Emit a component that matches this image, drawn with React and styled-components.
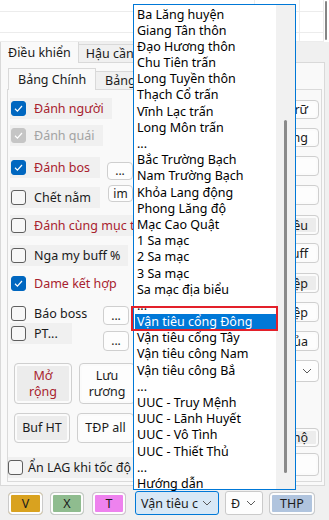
import React from "react";
import styled, { createGlobalStyle, css } from "styled-components";

const GlobalStyle = createGlobalStyle`
  html, body { margin: 0; padding: 0; }
  body {
    background: #f0f0f0;
    font-family: "Noto Sans", "Segoe UI", sans-serif;
    font-size: 12px;
    color: #1b1b1b;
  }
  * { box-sizing: border-box; }
`;

const places = [
  "Ba Lăng huyện", "Giang Tân thôn", "Đạo Hương thôn", "Chu Tiên trấn",
  "Long Tuyền thôn", "Thạch Cổ trấn", "Vĩnh Lạc trấn", "Long Môn trấn", "...",
  "Bắc Trường Bạch", "Nam Trường Bạch", "Khỏa Lang động", "Phong Lăng độ",
  "Mạc Cao Quật", "1 Sa mạc", "2 Sa mạc", "3 Sa mạc", "Sa mạc địa biểu", "...",
  "Vận tiêu cổng Đông", "Vận tiêu cổng Tây", "Vận tiêu công Nam", "Vận tiêu công Bắ",
  "...", "UUC - Truy Mệnh", "UUC - Lãnh Huyết", "UUC - Vô Tình", "UUC - Thiết Thủ",
  "...", "Hướng dẫn",
];

const rows = [
  { label: "Đánh người", state: "on", tone: "red", w: 102, mt: 8 },
  { label: "Đánh quái", state: "dis", tone: "dis", w: 93, mt: 7 },
  { label: "Đánh bos", state: "on", tone: "red", w: 90, mt: 12, extra: "...", ex: { ml: 7, mt: 5, w: 26, h: 18 } },
  { label: "Chết nằm", state: "off", tone: "ink", w: 90, mt: 10, extra: "im", ex: { ml: 8, mt: -2, w: 25, h: 17 } },
  { label: "Đánh cùng mục tiêu", state: "off", tone: "red", w: 170, mt: 8 },
  { label: "Nga my buff %", state: "off", tone: "ink", w: 118, mt: 10 },
  { label: "Dame kết hợp", state: "on", tone: "red", w: 118, mt: 8, plain: true },
  { label: "Báo boss", state: "off", tone: "ink", w: 88, mt: 10, plain: true, extra: "...", ex: { ml: 5, mt: 3, w: 26, h: 19 } },
  { label: "PT...", state: "off", tone: "ink", w: 62, mt: 0, extra: "...", ex: { ml: 31, mt: 8, w: 26, h: 20 } },
];

const rightButtons = [
  { label: "Lưu trữ", mt: 10, h: 19 },
  { label: "Tăng", mt: 9, h: 19 },
  { label: "", mt: 9, h: 20 },
  { label: "", mt: 9, h: 20 },
  { label: "Điều", mt: 10, h: 20, gray: true },
  { label: "Buff", mt: 8, h: 20 },
  { label: "Nghiệp", mt: 10, h: 20, gray: true },
  { label: "Hiệp", mt: 9, h: 20 },
  { label: "Của", mt: 9, h: 20 },
];

const Chevron = () => (
  <svg width="10" height="6" viewBox="0 0 10 6">
    <path d="M1 1 L5 5 L9 1" fill="none" stroke="#5a5a5a" strokeWidth="1" />
  </svg>
);

const Check = ({ state }) => (
  <Box $state={state}>
    {state !== "off" && (
      <svg width="11" height="11" viewBox="0 0 11 11">
        <path d="M2 5.8 L4.4 8.1 L9 3" fill="none" stroke="#fff" strokeWidth="1.2" />
      </svg>
    )}
  </Box>
);

export default function App() {
  return (
    <Root>
      <GlobalStyle />
      <ListView>
        <ListGrid>
          {Array.from({ length: 9 }).map((_, i) => (
            <Cell key={i} />
          ))}
        </ListGrid>
        <ListScroll>
          <ListThumb />
        </ListScroll>
      </ListView>

      <TabStrip>
        <Tab $active>Điều khiển</Tab>
        <Tab>Hậu cần</Tab>
      </TabStrip>
      <OuterPage>
        <InnerStrip>
          <Tab $active $inner>Bảng Chính</Tab>
          <Tab $inner>Bảng phụ</Tab>
        </InnerStrip>
        <InnerPage>
          <LeftCol>
            {rows.map((r) => (
              <Row key={r.label} $mt={r.mt}>
                <CheckLabel $w={r.w} $plain={r.plain}>
                  <Check state={r.state} />
                  <LabelText $tone={r.tone}>{r.label}</LabelText>
                </CheckLabel>
                {r.extra && (
                  <SmallBtn $ml={r.ex.ml} $mt={r.ex.mt} $w={r.ex.w} $h={r.ex.h}>
                    {r.extra}
                  </SmallBtn>
                )}
              </Row>
            ))}
            <BtnPair $mt={20}>
              <PushBtn $w={58} $h={41} $gray $tone="red">Mở<br />rộng</PushBtn>
              <PushBtn $w={56} $h={41}>Lưu<br />rương</PushBtn>
            </BtnPair>
            <BtnPair $mt={9}>
              <PushBtn $w={56} $h={30} $gray>Buf HT</PushBtn>
              <PushBtn $w={57} $h={30}>TĐP all</PushBtn>
            </BtnPair>
            <Row $mt={14}>
              <CheckLabel $w={170} $tight>
                <Check state="off" />
                <LabelText $tone="ink">Ẩn LAG khi tốc độ cao</LabelText>
              </CheckLabel>
            </Row>
          </LeftCol>
          <RightCol>
            {rightButtons.map((b, i) => (
              <SideBtn key={i} $mt={b.mt} $h={b.h} $gray={b.gray}>
                {b.label}
              </SideBtn>
            ))}
            <SideCombo>
              <Chevron />
            </SideCombo>
            <SideBtn $mt={46} $h={19} $gray>Bảo hộ</SideBtn>
            <SideBtn $mt={6} $h={23} />
          </RightCol>
        </InnerPage>
      </OuterPage>

      <BottomBar>
        <ColorBtn $fill="#d9a21f" $w={35}>V</ColorBtn>
        <ColorBtn $fill="#8fbc8f" $w={34}>X</ColorBtn>
        <ColorBtn $fill="#ee82ee" $w={34} $ml={8}>T</ColorBtn>
        <Combo $focus $w={84} $ml={9}>
          <span>Vận tiêu c</span>
          <Chevron />
        </Combo>
        <Combo $w={38} $ml={6}>
          <span>Đ</span>
          <Chevron />
        </Combo>
        <ColorBtn $fill="#b0c4de" $w={46} $ml={6}>THP</ColorBtn>
      </BottomBar>

      <DropList>
        <Items>
          {places.map((p, i) => (
            <Item key={i} $sel={i === 19}>{p}</Item>
          ))}
        </Items>
        <ScrollTrack>
          <ScrollThumb />
        </ScrollTrack>
      </DropList>
      <Marker />
    </Root>
  );
}

const Root = styled.div`
  position: relative;
  width: 329px;
  height: 520px;
  overflow: hidden;
  background: #f0f0f0;
`;

const ListView = styled.div`
  display: flex;
  height: 42px;
  background: #fff;
`;

const ListGrid = styled.div`
  flex: 1;
  display: grid;
  grid-template-columns: 255px 45px 1fr;
  grid-template-rows: 12px 21px 1fr;
`;

const Cell = styled.div`
  border-right: 1px solid #ececec;
  border-bottom: 1px solid #ececec;
`;

const ListScroll = styled.div`
  width: 5px;
  padding: 1px 1px 2px 1px;
`;

const ListThumb = styled.div`
  width: 2px;
  height: 100%;
  border-radius: 1px;
  background: #858585;
`;

const TabStrip = styled.div`
  display: flex;
  align-items: flex-end;
  width: 133px;
  height: 21px;
  overflow: hidden;
  position: relative;
  z-index: 1;
  margin-bottom: -1px;
`;

const InnerStrip = styled(TabStrip)`
  width: 132px;
  height: 22px;
  margin-top: 5px;
  padding-left: 7px;
`;

const Tab = styled.div`
  flex: none;
  height: ${(p) => (p.$active ? "22px" : "19px")};
  padding: 0 ${(p) => (p.$inner ? "9px" : "7px")} 1px;
  display: flex;
  align-items: center;
  white-space: nowrap;
  border: 1px solid #d9d9d9;
  border-bottom: ${(p) => (p.$active ? "none" : "1px solid #d9d9d9")};
  margin-left: ${(p) => (p.$active ? "0" : "-1px")};
  background: ${(p) => (p.$active ? "#f9f9f9" : "#f0f0f0")};
  position: relative;
  z-index: ${(p) => (p.$active ? 1 : 0)};
  font-size: 12.5px;
`;

const OuterPage = styled.div`
  width: 325px;
  height: 424px;
  background: #f9f9f9;
  border: 1px solid #d9d9d9;
`;

const InnerPage = styled.div`
  margin: -1px 2px 0 6px;
  height: 393px;
  background: #f9f9f9;
  border: 1px solid #dadada;
  display: grid;
  grid-template-columns: 126px 1fr 62px;
`;

const LeftCol = styled.div`
  display: flex;
  flex-direction: column;
  padding-left: 2px;
  grid-column: 1;
  overflow: hidden;
`;

const Row = styled.div`
  display: flex;
  height: 20px;
  margin-top: ${(p) => p.$mt}px;
  align-items: center;
  white-space: nowrap;
`;

const CheckLabel = styled.div`
  flex: none;
  width: ${(p) => p.$w}px;
  height: 21px;
  display: flex;
  align-items: center;
  gap: ${(p) => (p.$tight ? "5px" : "8px")};
  padding-left: ${(p) => (p.$tight ? "0" : "1px")};
  margin-left: ${(p) => (p.$tight ? "-2px" : "0")};
  background: ${(p) => (p.$plain ? "transparent" : "#f0f0f0")};
  overflow: hidden;
`;

const Box = styled.span`
  flex: none;
  width: 15px;
  height: 15px;
  border-radius: 3px;
  display: flex;
  align-items: center;
  justify-content: center;
  ${(p) =>
    p.$state === "on"
      ? css`background: #0067c0; border: 1px solid #0067c0;`
      : p.$state === "dis"
      ? css`background: #c5c5c5; border: 1px solid #c5c5c5;`
      : css`background: #f7f7f7; border: 1px solid #5f5f5f;`}
`;

const tones = { red: "#a8222e", ink: "#1b1b1b", dis: "#a3a3a3" };

const LabelText = styled.span`
  color: ${(p) => tones[p.$tone]};
  font-size: 12.5px;
`;

const SmallBtn = styled.div`
  flex: none;
  align-self: flex-start;
  margin-left: ${(p) => p.$ml}px;
  margin-top: ${(p) => p.$mt}px;
  width: ${(p) => p.$w}px;
  height: ${(p) => p.$h}px;
  border: 1px solid #cfcfcf;
  border-radius: 4px;
  background: #fdfdfd;
  display: flex;
  align-items: center;
  justify-content: center;
  font-size: 12px;
  line-height: 1;
`;

const BtnPair = styled.div`
  display: flex;
  gap: 7px;
  margin-top: ${(p) => p.$mt}px;
  padding-left: 4px;
`;

const PushBtn = styled.div`
  flex: none;
  width: ${(p) => p.$w}px;
  height: ${(p) => p.$h}px;
  border: 1px solid #cfcfcf;
  border-radius: 4px;
  background: ${(p) => (p.$gray ? "#ececec" : "#fdfdfd")};
  box-shadow: inset 0 0 0 2px #fbfbfb;
  display: flex;
  align-items: center;
  justify-content: center;
  text-align: center;
  line-height: 16px;
  font-size: 12.5px;
  color: ${(p) => (p.$tone === "red" ? "#a8222e" : "#1b1b1b")};
`;

const RightCol = styled.div`
  grid-column: 3;
  display: flex;
  flex-direction: column;
  padding-right: 2px;
`;

const SideBtn = styled.div`
  height: ${(p) => p.$h || 20}px;
  margin-top: ${(p) => p.$mt}px;
  border: 1px solid #cfcfcf;
  border-radius: 4px;
  background: ${(p) => (p.$gray ? "#ececec" : "#fdfdfd")};
  box-shadow: inset 0 0 0 2px #fbfbfb;
  display: flex;
  align-items: center;
  justify-content: flex-end;
  padding-right: 10px;
  font-size: 12.5px;
  white-space: nowrap;
`;

const SideCombo = styled.div`
  height: 22px;
  margin-top: 9px;
  border: 1px solid #cfcfcf;
  border-radius: 4px;
  background: #fdfdfd;
  display: flex;
  align-items: center;
  justify-content: flex-end;
  padding-right: 6px;
`;

const BottomBar = styled.div`
  display: flex;
  align-items: center;
  height: 33px;
  padding: 1px 0 0 8px;
  gap: 7px;
`;

const ColorBtn = styled.div`
  flex: none;
  width: ${(p) => p.$w}px;
  height: 23px;
  margin-left: ${(p) => (p.$ml ? p.$ml - 7 : 0)}px;
  border: 1px solid #cacaca;
  border-radius: 4px;
  background: ${(p) => p.$fill};
  box-shadow: inset 0 0 0 2px #fdfdfd;
  display: flex;
  align-items: center;
  justify-content: center;
  font-size: 12.5px;
  color: #1b1b1b;
`;

const Combo = styled.div`
  flex: none;
  width: ${(p) => p.$w}px;
  height: 24px;
  margin-left: ${(p) => p.$ml - 7}px;
  border: 1px solid ${(p) => (p.$focus ? "#0078d7" : "#cacaca")};
  border-radius: 3px;
  background: ${(p) => (p.$focus ? "#d8e8f6" : "#fdfdfd")};
  display: flex;
  align-items: center;
  justify-content: space-between;
  padding: 0 6px 0 5px;
  font-size: 12.5px;
  white-space: nowrap;
  overflow: hidden;
`;

const DropList = styled.div`
  position: absolute;
  left: 133px;
  top: 4px;
  width: 163px;
  height: 486px;
  background: #fff;
  border: 1px solid #0078d7;
  display: flex;
  z-index: 5;
`;

const Items = styled.div`
  width: 142px;
  padding: 1.5px 0 0 1px;
`;

const Item = styled.div`
  height: 16.2px;
  line-height: 16.2px;
  padding-left: 2px;
  white-space: nowrap;
  font-size: 12.5px;
  color: ${(p) => (p.$sel ? "#fff" : "#000")};
  background: ${(p) => (p.$sel ? "#0078d7" : "transparent")};
`;

const ScrollTrack = styled.div`
  flex: 1;
  background: #f1f1f1;
  display: flex;
  justify-content: center;
  padding-top: 115px;
  padding-bottom: 16px;
`;

const ScrollThumb = styled.div`
  width: 3px;
  height: 100%;
  border-radius: 2px;
  background: #8a8a8a;
`;

const Marker = styled.div`
  position: absolute;
  z-index: 6;
  left: 131px;
  top: 306px;
  width: 147px;
  height: 25px;
  border: 2px solid #e3202a;
`;
